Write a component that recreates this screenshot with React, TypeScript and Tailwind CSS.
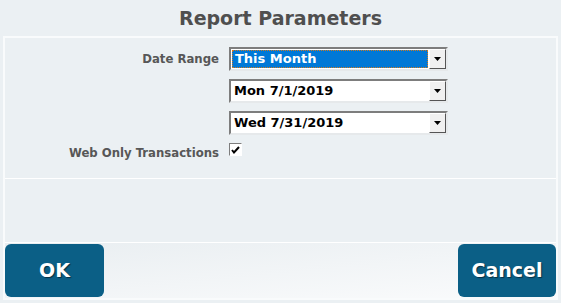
import { Fragment } from 'react'

const FONT = { fontFamily: '"DejaVu Sans", Verdana, sans-serif' }
const LABEL_FONT = { fontFamily: '"DejaVu Sans Condensed", "DejaVu Sans", Tahoma, sans-serif' }

function DropButton() {
  return (
    <div className="w-[17px] h-full bg-[#f0f0f0] border border-t-white border-l-white border-r-[#555] border-b-[#555] flex items-center justify-center">
      <svg width="7" height="4" viewBox="0 0 7 4">
        <path d="M0 0h7L3.5 4z" fill="#000" />
      </svg>
    </div>
  )
}

function Select({ value, focused }: { value: string; focused?: boolean }) {
  return (
    <div className="w-[219px] h-[24px] border-2 border-t-[#7d7d7d] border-l-[#7d7d7d] border-r-[#e6e9eb] border-b-[#e6e9eb] bg-white flex">
      <div className="flex-1 p-[1px] flex">
        <div
          className={`flex-1 flex items-center pl-[2px] text-[13px] font-bold ${
            focused ? 'bg-[#0078d7] text-white border border-dotted border-[#d07a20]' : 'text-black'
          }`}
        >
          {value}
        </div>
      </div>
      <DropButton />
    </div>
  )
}

export default function App() {
  const rows = [
    { label: 'Date Range', value: 'This Month', focused: true },
    { label: '', value: 'Mon 7/1/2019' },
    { label: '', value: 'Wed 7/31/2019' },
  ]

  return (
    <div className="w-[561px] h-[303px] bg-[#ebf0f3] flex flex-col overflow-hidden" style={FONT}>
      {/* Title */}
      <div className="h-[36px] flex items-center justify-center text-[19px] font-bold text-[#4f4f4f]">
        Report Parameters
      </div>

      {/* Panel */}
      <div className="mx-[3px] w-[555px] h-[264px] border-2 border-[#f9fbfc] flex flex-col">
        <div className="h-[140px] pt-[9px] grid grid-cols-[214px_1fr] gap-x-[10px] gap-y-[8px] content-start text-[13px] font-bold text-[#575757]">
          {rows.map((r, i) => (
            <Fragment key={i}>
              <div className="text-right self-center" style={LABEL_FONT}>{r.label}</div>
              <Select value={r.value} focused={r.focused} />
            </Fragment>
          ))}
          <div className="text-right self-center" style={LABEL_FONT}>Web Only Transactions</div>
          <div className="w-[13px] h-[13px] border border-t-[#7d7d7d] border-l-[#7d7d7d] border-r-white border-b-white bg-white flex items-center justify-center">
            <svg width="9" height="8" viewBox="0 0 9 8">
              <path d="M1 4l2 2.5L8 1" stroke="#000" strokeWidth="2" fill="none" />
            </svg>
          </div>
        </div>
        <div className="h-[64px] border-t border-white" />
        <div className="flex-1 border-t border-white bg-gradient-to-br from-[#e9eef1] to-[#fafbfc] flex justify-between items-stretch pt-[1px] pb-[1px] px-[0px]">
          <button className="w-[99px] rounded-[6px] bg-[#0b5f86] text-white text-[19px] font-bold [text-shadow:1px_1px_1px_rgba(0,0,0,0.5)]">
            OK
          </button>
          <button className="w-[98px] rounded-[6px] bg-[#0b5f86] text-white text-[19px] font-bold [text-shadow:1px_1px_1px_rgba(0,0,0,0.5)]">
            Cancel
          </button>
        </div>
      </div>
    </div>
  )
}
